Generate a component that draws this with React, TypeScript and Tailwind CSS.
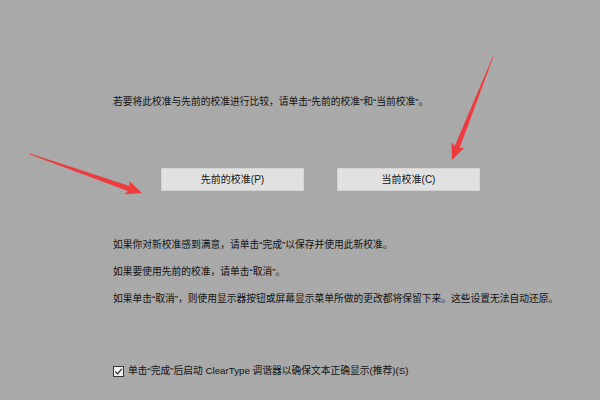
const font = "font-['Liberation_Sans','Noto_Sans_CJK_SC',sans-serif]"

type Pt = [number, number]

// tapered red arrow: thin at the tail, a barbed head at the tip
function arrowPoints(tail: Pt, tip: Pt) {
  const dx = tip[0] - tail[0]
  const dy = tip[1] - tail[1]
  const len = Math.hypot(dx, dy)
  const ux = dx / len
  const uy = dy / len
  const nx = -uy
  const ny = ux
  const headLen = 16
  const bx = tip[0] - ux * headLen
  const by = tip[1] - uy * headLen
  const at = (x: number, y: number, s: number): string =>
    `${(x + nx * s).toFixed(1)},${(y + ny * s).toFixed(1)}`
  return [
    at(tail[0], tail[1], 0.4),
    at(bx + ux * 2, by + uy * 2, 2.6),
    at(bx, by, 7),
    `${tip[0]},${tip[1]}`,
    at(bx, by, -7),
    at(bx + ux * 2, by + uy * 2, -2.6),
    at(tail[0], tail[1], -0.4),
  ].join(' ')
}

function WinButton({ label }: { label: string }) {
  return (
    <button className="flex h-[23px] w-[143px] items-center justify-center border border-[#d4d4d4] bg-[#e1e1e1] text-[10px] text-[#111]">
      {label}
    </button>
  )
}

export default function App() {
  return (
    <div className={`relative h-[400px] w-[600px] overflow-hidden bg-[#a9a9a9] pl-[113px] pt-[95px] text-[9.75px] text-[#111] ${font}`}>
      <p className="leading-[14px]">
        若要将此校准与先前的校准进行比较，请单击“先前的校准”和“当前校准”。
      </p>

      <div className="mt-[59px] flex gap-[33px] pl-[48px]">
        <WinButton label="先前的校准(P)" />
        <WinButton label="当前校准(C)" />
      </div>

      <div className="mt-[47px] flex flex-col gap-[13px] leading-[14px]">
        <p>如果你对新校准感到满意，请单击“完成”以保存并使用此新校准。</p>
        <p>如果要使用先前的校准，请单击“取消”。</p>
        <p>
          如果单击“取消”，则使用显示器按钮或屏幕显示菜单所做的更改都将保留下来。这些设置无法自动还原。
        </p>
      </div>

      <label className="mt-[58px] flex items-center gap-[4px] leading-[14px]">
        <span className="flex h-[11px] w-[11px] items-center justify-center border border-[#333] bg-[#f2f2f2]">
          <svg viewBox="0 0 10 10" className="h-[9px] w-[9px]">
            <path d="M1.5 5.2 L4 7.6 L8.6 2.2" fill="none" stroke="#222" strokeWidth="1.3" />
          </svg>
        </span>
        单击“完成”后启动 ClearType 调谐器以确保文本正确显示(推荐)(S)
      </label>

      <svg className="pointer-events-none absolute inset-0" width="600" height="400">
        <polygon points={arrowPoints([30, 154], [142, 193])} fill="#ee3b3b" />
        <polygon points={arrowPoints([493, 57], [452, 160])} fill="#ee3b3b" />
      </svg>
    </div>
  )
}
